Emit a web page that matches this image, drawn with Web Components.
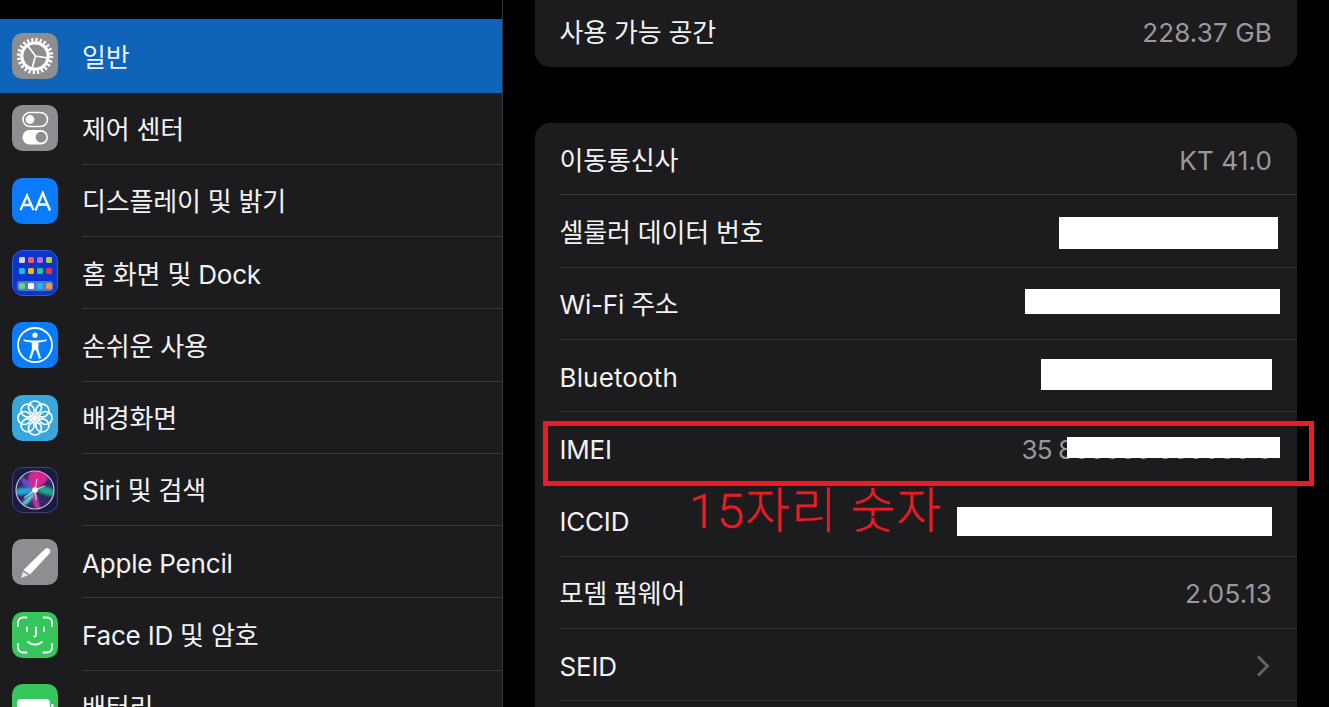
<!DOCTYPE html>
<html lang="ko">
<head>
<meta charset="utf-8">
<style>
html, body { margin: 0; height: 707px; overflow: hidden; background: #000; }
body { font-family: Inter, "Noto Sans CJK KR", sans-serif; }
</style>
</head>
<body>
<settings-screen>
  <settings-sidebar slot="side">
    <sidebar-row icon="gear" selected>일반</sidebar-row>
    <sidebar-row icon="toggles">제어 센터</sidebar-row>
    <sidebar-row icon="text">디스플레이 및 밝기</sidebar-row>
    <sidebar-row icon="home">홈 화면 및 Dock</sidebar-row>
    <sidebar-row icon="access">손쉬운 사용</sidebar-row>
    <sidebar-row icon="flower">배경화면</sidebar-row>
    <sidebar-row icon="siri">Siri 및 검색</sidebar-row>
    <sidebar-row icon="pencil">Apple Pencil</sidebar-row>
    <sidebar-row icon="face">Face ID 및 암호</sidebar-row>
    <sidebar-row icon="battery">배터리</sidebar-row>
  </settings-sidebar>
  <about-panel slot="main">
    <info-card class="first">
      <info-row label="사용 가능 공간" value="228.37 GB"></info-row>
    </info-card>
    <info-card>
      <info-row label="이동통신사" value="KT 41.0"></info-row>
      <info-row label="셀룰러 데이터 번호" mask="1059 1278 22 32"></info-row>
      <info-row label="Wi-Fi 주소" value="00:00:00:00:00:00" spacing="-1.4" mask="1025 1280 21.500 25"></info-row>
      <info-row label="Bluetooth" label-spacing="0.15" value="00:00:00:00:00:00" spacing="-1.2" mask="1041 1272 19.500 31"></info-row>
      <info-row label="IMEI" value="35 800000 000000 0" spacing="-0.9" mask="1067 1280 25 21"></info-row>
      <info-row label="ICCID" mask="957 1272 23 29"></info-row>
      <info-row label="모뎀 펌웨어" value="2.05.13"></info-row>
      <info-row label="SEID" chevron></info-row>
      <info-row label=""></info-row>
    </info-card>
    <imei-callout></imei-callout>
  </about-panel>
</settings-screen>
<script>
class SettingsScreen extends HTMLElement {
  constructor() {
    super();
    this.attachShadow({ mode: 'open' }).innerHTML = `
      <style>
      :host { display: grid; grid-template-columns: 503px 1fr; height: 707px; background: #000; overflow: hidden; }
      </style>
      <slot name="side"></slot>
      <slot name="main"></slot>`;
  }
}

class SettingsSidebar extends HTMLElement {
  constructor() {
    super();
    this.attachShadow({ mode: 'open' }).innerHTML = `
      <style>
      :host { display: block; height: 707px; overflow: hidden; padding-top: 19px; box-sizing: border-box; border-right: 1px solid #38383a; background: linear-gradient(#000 19px, #1c1c1e 19px); }
      </style>
      <slot></slot>`;
  }
}

const ICONS = {
  gear: `<svg viewBox="0 0 46 46"><rect width="46" height="46" rx="10.500" fill="#8e8e92"/>
    <circle cx="23" cy="23" r="16.400" fill="none" stroke="#fff" stroke-width="3.400" stroke-dasharray="2.150 2.143"/>
    <circle cx="23" cy="23" r="13.200" fill="none" stroke="#fff" stroke-width="3.200"/>
    <path d="M23.500 23L15.500 12.500M23.500 23L36 25M23.500 23L20 35.500" fill="none" stroke="#fff" stroke-width="1.700"/></svg>`,
  toggles: `<svg viewBox="0 0 46 46"><rect width="46" height="46" rx="10.500" fill="#8e8e92"/>
    <rect x="11" y="7.500" width="24.500" height="14" rx="7" fill="none" stroke="#fff" stroke-width="1.600"/>
    <circle cx="18" cy="14.500" r="4.400" fill="#fff"/>
    <rect x="10.500" y="25" width="25.500" height="14.500" rx="7.250" fill="#fff"/>
    <circle cx="29" cy="32.200" r="5.400" fill="#8e8e92"/></svg>`,
  text: `<svg viewBox="0 0 46 46"><rect width="46" height="46" rx="10.500" fill="#0a7cfb"/>
    <path d="M8.500 32L15 17.500 21.500 32M10.800 27h8.400M23.500 32.500L30.700 15 38 32.500M26 26.500h9.500" fill="none" stroke="#fff" stroke-width="2.300"/></svg>`,
  home: `<svg viewBox="0 0 46 46"><rect x=".5" y=".5" width="45" height="45" rx="10.500" fill="#0c35c9" stroke="#2a5be0"/>
    <rect x="5" y="31" width="36" height="10" rx="3" fill="#5577c9"/>
    <g><rect x="7" y="7" width="6" height="6" rx="1.500" fill="#d8d8de"/><rect x="16" y="7" width="6" height="6" rx="1.500" fill="#ef5a72"/><rect x="25" y="7" width="6" height="6" rx="1.500" fill="#b06bf0"/><rect x="34" y="7" width="6" height="6" rx="1.500" fill="#a9d33e"/>
    <rect x="7" y="18" width="6" height="6" rx="1.500" fill="#1cb7ef"/><rect x="16" y="18" width="6" height="6" rx="1.500" fill="#f4b90e"/><rect x="25" y="18" width="6" height="6" rx="1.500" fill="#25c98a"/><rect x="34" y="18" width="6" height="6" rx="1.500" fill="#ee3340"/>
    <rect x="7" y="33" width="6" height="6" rx="1.500" fill="#55dc77"/><rect x="16" y="33" width="6" height="6" rx="1.500" fill="#fff"/><rect x="25" y="33" width="6" height="6" rx="1.500" fill="#1cb7ef"/><rect x="34" y="33" width="6" height="6" rx="1.500" fill="#f49a3e"/></g></svg>`,
  access: `<svg viewBox="0 0 46 46"><rect width="46" height="46" rx="10.500" fill="#0a7cfb"/>
    <circle cx="23" cy="23" r="17" fill="none" stroke="#fff" stroke-width="1.800"/>
    <circle cx="23" cy="13.200" r="2.600" fill="#fff"/>
    <path d="M11.500 17.200c4 1 7.500 1.400 11.500 1.400s7.500-.4 11.500-1.400v1.700c-3 .9-5.500 1.300-8 1.600l-.2 6.500 2.700 9.200-2 .6-3-8.600h-1.800l-3 8.600-2-.6 2.700-9.200-.2-6.500c-2.500-.3-5-.7-8-1.600z" fill="#fff"/></svg>`,
  flower: `<svg viewBox="0 0 46 46"><rect width="46" height="46" rx="10.500" fill="#38a7db"/>
    <g fill="none" stroke="#fff" stroke-width="1.700">
    <circle cx="23" cy="12.500" r="6.500"/><circle cx="23" cy="33.500" r="6.500"/><circle cx="12.500" cy="23" r="6.500"/><circle cx="33.500" cy="23" r="6.500"/>
    <circle cx="15.600" cy="15.600" r="6.500"/><circle cx="30.400" cy="15.600" r="6.500"/><circle cx="15.600" cy="30.400" r="6.500"/><circle cx="30.400" cy="30.400" r="6.500"/></g>
    <circle cx="23" cy="23" r="3" fill="#fff"/></svg>`,
  siri: `<svg viewBox="0 0 46 46"><defs>
    <filter id="s" x="-30%" y="-30%" width="160%" height="160%"><feGaussianBlur stdDeviation="1.300"/></filter>
    <filter id="t" x="-30%" y="-30%" width="160%" height="160%"><feGaussianBlur stdDeviation=".6"/></filter>
    <clipPath id="c"><circle cx="23" cy="23" r="19"/></clipPath></defs>
    <rect x=".5" y=".5" width="45" height="45" rx="10.500" fill="#1a1a45" stroke="#45426b"/>
    <circle cx="23" cy="23" r="19" fill="#2f2a63"/>
    <g clip-path="url(#c)"><g filter="url(#s)">
    <path d="M23 23C15 16 14 6 22 3 32 3 36 8 36 12 32 17 27 20 23 23z" fill="#d9258f"/>
    <path d="M23 23C14 20 6 19 3 25 5 30 15 29 23 23z" fill="#1fa8dc"/>
    <path d="M23 23C17 28 12 34 9 37 14 41 21 33 23 23z" fill="#4fd8cc"/>
    <path d="M23 23C25 30 28 38 28 42 21 43 19 32 23 23z" fill="#c9389f"/>
    <path d="M23 23C30 27 38 30 43 28 44 20 32 17 23 23z" fill="#1fa58a"/>
    <path d="M23 23C20 16 13 11 9 10 8 17 16 22 23 23z" fill="#6d4fd0"/></g>
    <path d="M23 23L12 31M23 23L33 19M23 23L25 12M23 23L24.500 33" stroke="#fff" stroke-width="1.300" opacity=".7" filter="url(#t)"/>
    <circle cx="23" cy="23" r="2.800" fill="#fff" filter="url(#t)"/></g>
    <circle cx="23" cy="23" r="19" fill="none" stroke="#c9bfd2" stroke-width="1.200"/></svg>`,
  pencil: `<svg viewBox="0 0 46 46"><rect width="46" height="46" rx="10.500" fill="#8e8e92"/>
    <path d="M32.500 10.500c1.600-1.700 3.500-1.700 4.800-.5s1.500 3 0 4.800L18 35.500l-6.500-4.500z" fill="#fff"/>
    <path d="M11 32.500l5.500 3.800-7.500 2.700z" fill="#e4e4e6"/></svg>`,
  face: `<svg viewBox="0 0 46 46"><rect width="46" height="46" rx="10.500" fill="#34c65a"/>
    <g fill="none" stroke="#fff" stroke-width="1.800" stroke-linecap="round">
    <path d="M6 14V10.500A5 5 0 0 1 11 5.500h3.500M31.500 5.500H35a5 5 0 0 1 5 5V14M40 32v3.500a5 5 0 0 1-5 5h-3.500M14.500 40.500H11a5 5 0 0 1-5-5V32"/>
    <path d="M15 15.500v3.500M32 15.500v3.500M24 15.500v7.500c0 1-.7 1.500-1.800 1.500M16 30c4 3.500 10 3.500 14 0"/></g></svg>`,
  battery: `<svg viewBox="0 0 46 46"><rect width="46" height="46" rx="10.500" fill="#34c65a"/>
    <rect x="6" y="16" width="31" height="16" rx="3" fill="#fff" stroke="#fff" stroke-width="2"/>
    <rect x="39" y="20" width="2.500" height="7" rx="1" fill="#fff"/></svg>`
};

class SidebarRow extends HTMLElement {
  constructor() {
    super();
    this.shadow = this.attachShadow({ mode: 'open' });
  }
  connectedCallback() {
    this.shadow.innerHTML = `
      <style>
      :host { display: flex; align-items: center; height: 72.3px; color: #f2f2f4; font-size: 26px; line-height: 32px; letter-spacing: -0.2px; }
      :host([selected]) { background: #0f64b9; height: 74px; margin-bottom: -0.7px; }
      .icon { width: 46px; height: 46px; margin-left: 11.5px; flex: none; }
      .icon svg { display: block; width: 46px; height: 46px; }
      .text { flex: 1; align-self: stretch; display: flex; align-items: center; margin-left: 24.5px; padding-top: 4px; border-bottom: 1px solid #38383a; box-sizing: border-box; }
      :host([selected]) .text { border-bottom: 0; }
      </style>
      <div class="icon">${ICONS[this.getAttribute('icon')]}</div>
      <div class="text"><slot></slot></div>`;
  }
}

class AboutPanel extends HTMLElement {
  constructor() {
    super();
    this.attachShadow({ mode: 'open' }).innerHTML = `
      <style>
      :host { display: flex; flex-direction: column; gap: 56px; position: relative; height: 707px; overflow: hidden; padding: 0 32px; box-sizing: border-box; }
      </style>
      <slot></slot>`;
  }
}

class InfoCard extends HTMLElement {
  constructor() {
    super();
    this.attachShadow({ mode: 'open' }).innerHTML = `
      <style>
      :host { display: block; flex: none; background: #1c1c1e; border-radius: 15px; overflow: hidden; }
      :host(.first) { border-radius: 0 0 15px 15px; margin-top: -5.3px; }
      </style>
      <slot></slot>`;
  }
}

class InfoRow extends HTMLElement {
  constructor() {
    super();
    this.shadow = this.attachShadow({ mode: 'open' });
  }
  connectedCallback() {
    const label = this.getAttribute('label');
    const value = this.getAttribute('value') || '';
    const spacing = this.getAttribute('spacing') || 0.15;
    const labelSpacing = this.getAttribute('label-spacing') || -0.2;
    // mask = page x from, page x to, top inside the row, height
    const mask = (this.getAttribute('mask') || '').split(' ').map(Number);
    const maskStyle = mask.length === 4
      ? `right: ${1297 - mask[1]}px; width: ${mask[1] - mask[0]}px; top: ${mask[2]}px; height: ${mask[3]}px;`
      : '';
    this.shadow.innerHTML = `
      <style>
      :host { display: block; color: #f2f2f4; font-size: 26px; line-height: 32px; }
      .row { position: relative; display: flex; align-items: center; justify-content: space-between; height: 72.3px; margin-left: 24.5px; padding-right: 25px; padding-top: 4px; box-sizing: border-box; border-bottom: 1px solid #38383a; }
      :host(:last-child) .row { border-bottom: 0; }
      .label { letter-spacing: ${labelSpacing}px; }
      .value { color: #98989d; letter-spacing: ${spacing}px; white-space: nowrap; }
      .mask { position: absolute; background: #fff; ${maskStyle} }
      svg { display: block; width: 16px; height: 24px; margin-right: 1px; margin-top: -2px; }
      </style>
      <div class="row">
        <span class="label">${label}</span>
        <span class="value">${value}</span>
        ${this.hasAttribute('chevron') ? '<svg viewBox="0 0 16 24"><path d="M3 2.500l9.500 9.500-9.500 9.500" fill="none" stroke="#636366" stroke-width="3"/></svg>' : ''}
        ${maskStyle ? '<div class="mask"></div>' : ''}
      </div>`;
  }
}

class ImeiCallout extends HTMLElement {
  constructor() {
    super();
    this.attachShadow({ mode: 'open' }).innerHTML = `
      <style>
      :host { display: block; position: absolute; left: 40px; top: 421px; width: 771px; height: 65px; box-sizing: border-box; border: 5px solid #ed1c24; }
      .note { position: absolute; left: 141px; top: 51px; font-size: 49px; line-height: 70px; color: #ed1c24; white-space: nowrap; font-family: Roboto, "Noto Sans CJK KR", sans-serif; font-weight: 300; letter-spacing: 1px; -webkit-text-stroke: 0.4px #ed1c24; }
      </style>
      <div class="note">15자리 숫자</div>`;
  }
}

customElements.define('settings-screen', SettingsScreen);
customElements.define('settings-sidebar', SettingsSidebar);
customElements.define('sidebar-row', SidebarRow);
customElements.define('about-panel', AboutPanel);
customElements.define('info-card', InfoCard);
customElements.define('info-row', InfoRow);
customElements.define('imei-callout', ImeiCallout);
</script>
</body>
</html>
